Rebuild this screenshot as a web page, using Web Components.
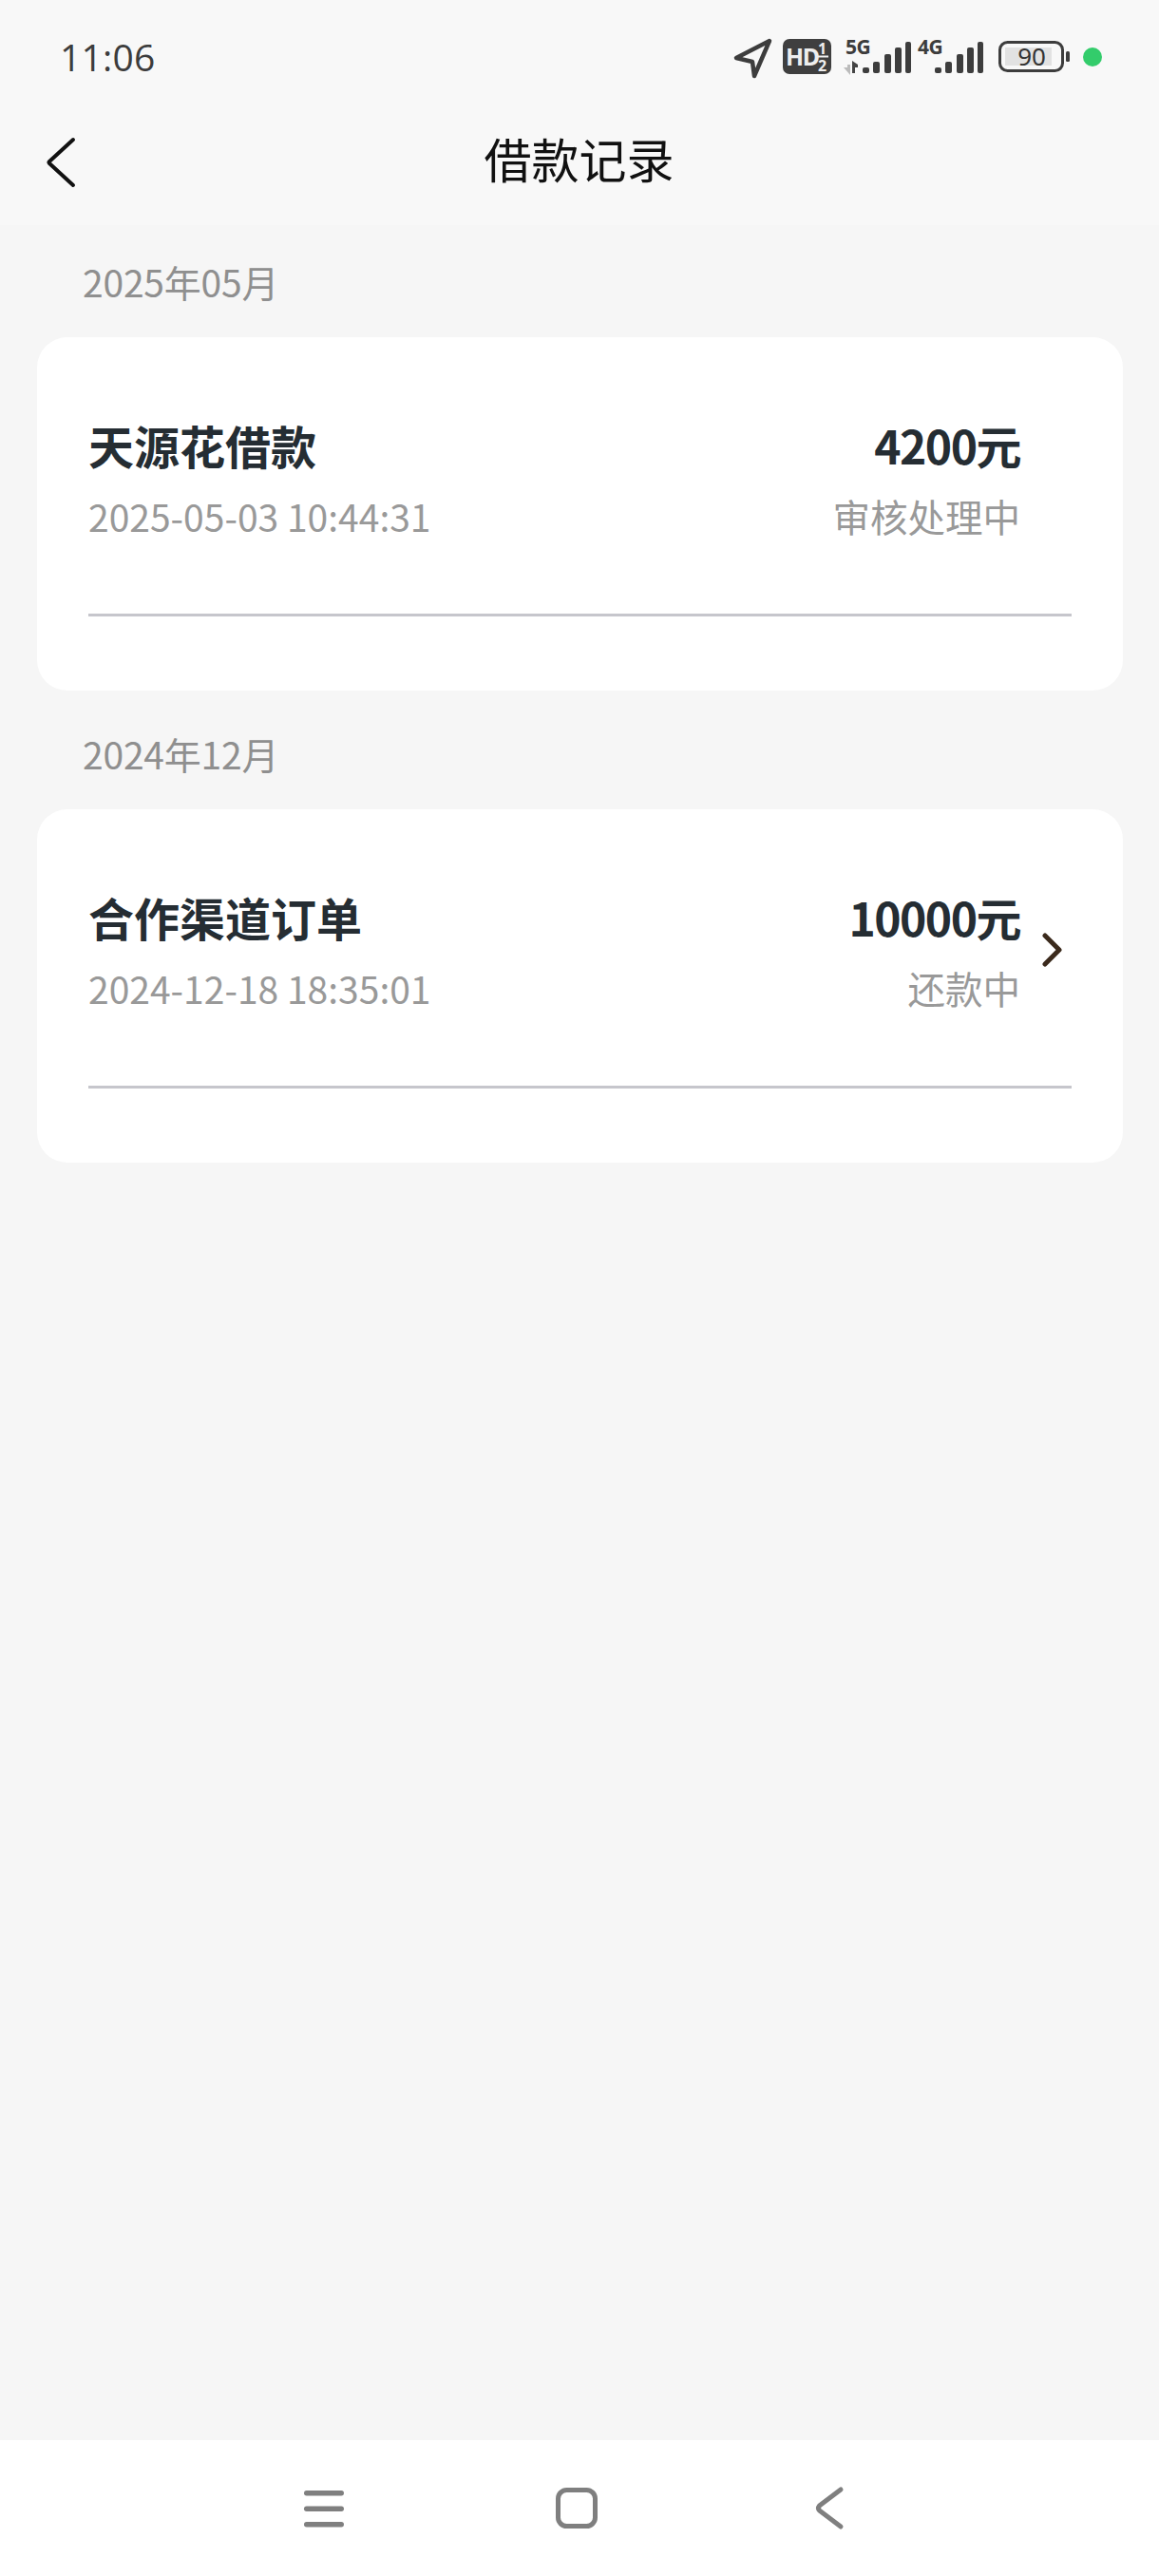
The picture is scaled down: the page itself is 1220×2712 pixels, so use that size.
<!DOCTYPE html>
<html lang="zh-CN">
<head>
<meta charset="utf-8">
<title>借款记录</title>
<style>
html,body{margin:0;padding:0;height:100%}
body{background:#f6f6f6;font-family:"Noto Sans CJK SC","Noto Sans",sans-serif;}
#app{display:flex;flex-direction:column;height:2712px;width:1220px;overflow:hidden}
</style>
</head>
<body>
<div id="app">
  <top-header title-text="借款记录"></top-header>
  <record-list>
    <month-label>2025年05月</month-label>
    <record-card name="天源花借款" time="2025-05-03 10:44:31" amount="4200元" status="审核处理中"></record-card>
    <month-label>2024年12月</month-label>
    <record-card name="合作渠道订单" time="2024-12-18 18:35:01" amount="10000元" status="还款中" arrow></record-card>
  </record-list>
  <bottom-nav></bottom-nav>
</div>
<script>
class TopHeader extends HTMLElement{
  connectedCallback(){
    const t=this.getAttribute('title-text')||'';
    this.attachShadow({mode:'open'}).innerHTML=`
    <style>
      :host{display:block;background:#f8f8f8;height:237px;flex:none}
      .status{height:120px;display:flex;align-items:center;justify-content:space-between}
      .time{font:500 39px/1 "Open Sans","Noto Sans",sans-serif;color:#3c3c3c;margin-left:63px;margin-top:-2px;letter-spacing:.2px}
      svg.st{display:block}
      .bar{height:97px;display:flex;align-items:center;justify-content:center;position:relative;margin-top:-9px}
      .ttl{font:400 50px/60px "Noto Sans CJK SC",sans-serif;color:#111;margin-top:12px;margin-left:-1px}
      .back{position:absolute;left:48px;top:32px}
    </style>
    <div class="status">
      <span class="time">11:06</span>
      <svg class="st" width="460" height="60" viewBox="760 30 460 60">
        <path d="M810 43 L775 61 L792 65 L794 80 Z" fill="none" stroke="#3d3d3d" stroke-width="4.5" stroke-linejoin="round"/>
        <rect x="824" y="41" width="51" height="37" rx="7" fill="#3f3f3f"/>
        <text x="827" y="69" font-family="Noto Sans" font-weight="700" font-size="25" letter-spacing="-1.5" fill="#eee">HD</text>
        <text x="861" y="57" font-family="Noto Sans" font-weight="700" font-size="16" fill="#eee">1</text>
        <rect x="860" y="58.5" width="12" height="2" fill="#eee"/>
        <text x="861" y="75" font-family="Noto Sans" font-weight="700" font-size="16" fill="#eee">2</text>
        <text x="890" y="57" font-family="Noto Sans" font-weight="700" font-size="21" letter-spacing="-.5" fill="#3d3d3d">5G</text>
        <path d="M888 71h4v-3h3v11z" fill="#bbb"/>
        <path d="M897 64l6 4v3h-3v6h-3z" fill="#444"/>
        <g fill="#3d3d3d">
          <rect x="908" y="71" width="7" height="6" rx="2"/>
          <rect x="919" y="65" width="7" height="12" rx="2"/>
          <rect x="931" y="57" width="7" height="20" rx="2"/>
          <rect x="942" y="50" width="7" height="27" rx="2"/>
          <rect x="953" y="44" width="6" height="33" rx="2"/>
        </g>
        <text x="966" y="57" font-family="Noto Sans" font-weight="700" font-size="21" letter-spacing="-.5" fill="#3d3d3d">4G</text>
        <g fill="#3d3d3d">
          <rect x="984" y="71" width="7" height="6" rx="2"/>
          <rect x="995" y="65" width="7" height="12" rx="2"/>
          <rect x="1007" y="57" width="7" height="20" rx="2"/>
          <rect x="1018" y="50" width="7" height="27" rx="2"/>
          <rect x="1029" y="44" width="6" height="33" rx="2"/>
        </g>
        <rect x="1052.5" y="44.5" width="66" height="30" rx="8" fill="none" stroke="#3d3d3d" stroke-width="3"/>
        <rect x="1058" y="50" width="49" height="19" fill="#e2e2e2"/>
        <text x="1086" y="69" text-anchor="middle" font-family="Noto Sans" font-size="26" fill="#333">90</text>
        <rect x="1122" y="54" width="4" height="11" rx="1.5" fill="#3d3d3d"/>
        <circle cx="1150" cy="60" r="10" fill="#33cc6b"/>
      </svg>
    </div>
    <div class="bar">
      <svg class="back" width="34" height="56" viewBox="0 0 34 56"><path d="M29 4 L4 27 Q3 28 4 29 L29 52" fill="none" stroke="#111" stroke-width="4" stroke-linecap="round"/></svg>
      <span class="ttl">${t}</span>
    </div>`;
  }
}
class RecordList extends HTMLElement{
  constructor(){super();this.attachShadow({mode:'open'}).innerHTML=`
    <style>:host{display:flex;flex-direction:column;flex:1;padding:29px 38px 0 39px;box-sizing:border-box;background:#f6f6f6}</style><slot></slot>`;}
}
class MonthLabel extends HTMLElement{
  constructor(){super();this.attachShadow({mode:'open'}).innerHTML=`
    <style>:host{display:block;font:400 39px/60px "Noto Sans CJK SC",sans-serif;color:#8f8f8f;padding-left:48px;margin-bottom:29px;letter-spacing:-.2px}</style><slot></slot>`;}
}
class RecordCard extends HTMLElement{
  connectedCallback(){
    const a=n=>this.getAttribute(n)||'';
    const arrow=this.hasAttribute('arrow')?`<svg width="22" height="36" viewBox="0 0 22 36"><path d="M3 3 L18 18 L3 33" fill="none" stroke="#3b2a1c" stroke-width="5" stroke-linecap="round" stroke-linejoin="round"/></svg>`:'';
    this.attachShadow({mode:'open'}).innerHTML=`
    <style>
      :host{display:block;background:#fff;border-radius:32px;height:372px;box-sizing:border-box;padding:83px 54px 0;margin-bottom:36px}
      .row{display:flex;align-items:center;height:135px}
      .l{flex:1;display:flex;flex-direction:column;gap:15px}
      .r{display:flex;flex-direction:column;gap:15px;text-align:right}
      .t{font:700 48px/60px "Noto Sans CJK SC",sans-serif;color:#252d33;white-space:nowrap}
      .amt{font:700 48px/60px "Noto Sans CJK SC",sans-serif;color:#252d33;letter-spacing:-1.5px;white-space:nowrap}
      .s{font:400 39px/60px "Noto Sans CJK SC",sans-serif;color:#999;white-space:nowrap}
      .st{font-size:39.5px}
      .ar{width:54px;flex:none;display:flex;justify-content:flex-end;padding-right:9px;box-sizing:border-box;margin-bottom:5px}
      .div{height:3px;background:#c6c6cc;margin-top:73px}
    </style>
    <div class="row">
      <div class="l"><div class="t">${a('name')}</div><div class="s">${a('time')}</div></div>
      <div class="r"><div class="amt">${a('amount')}</div><div class="s st">${a('status')}</div></div>
      <div class="ar">${arrow}</div>
    </div>
    <div class="div"></div>`;
  }
}
class BottomNav extends HTMLElement{
  constructor(){super();this.attachShadow({mode:'open'}).innerHTML=`
    <style>
      :host{display:block;height:143px;background:#fff;flex:none}
      svg{display:block}
    </style>
    <svg width="1220" height="143" viewBox="0 2569 1220 143">
      <g fill="#7f7f7f">
        <rect x="320" y="2622" width="42" height="5.5" rx="2.7"/>
        <rect x="320" y="2638.5" width="42" height="5.5" rx="2.7"/>
        <rect x="320" y="2655" width="42" height="5.5" rx="2.7"/>
      </g>
      <rect x="587.5" y="2621.5" width="39" height="38" rx="9" fill="none" stroke="#7f7f7f" stroke-width="5"/>
      <path d="M885 2621 L862.5 2638 Q860.5 2640.5 862.5 2643 L885 2660" fill="none" stroke="#7f7f7f" stroke-width="5" stroke-linecap="round" stroke-linejoin="round"/>
    </svg>`;}
}
customElements.define('top-header',TopHeader);
customElements.define('record-list',RecordList);
customElements.define('month-label',MonthLabel);
customElements.define('record-card',RecordCard);
customElements.define('bottom-nav',BottomNav);
</script>
</body>
</html>
